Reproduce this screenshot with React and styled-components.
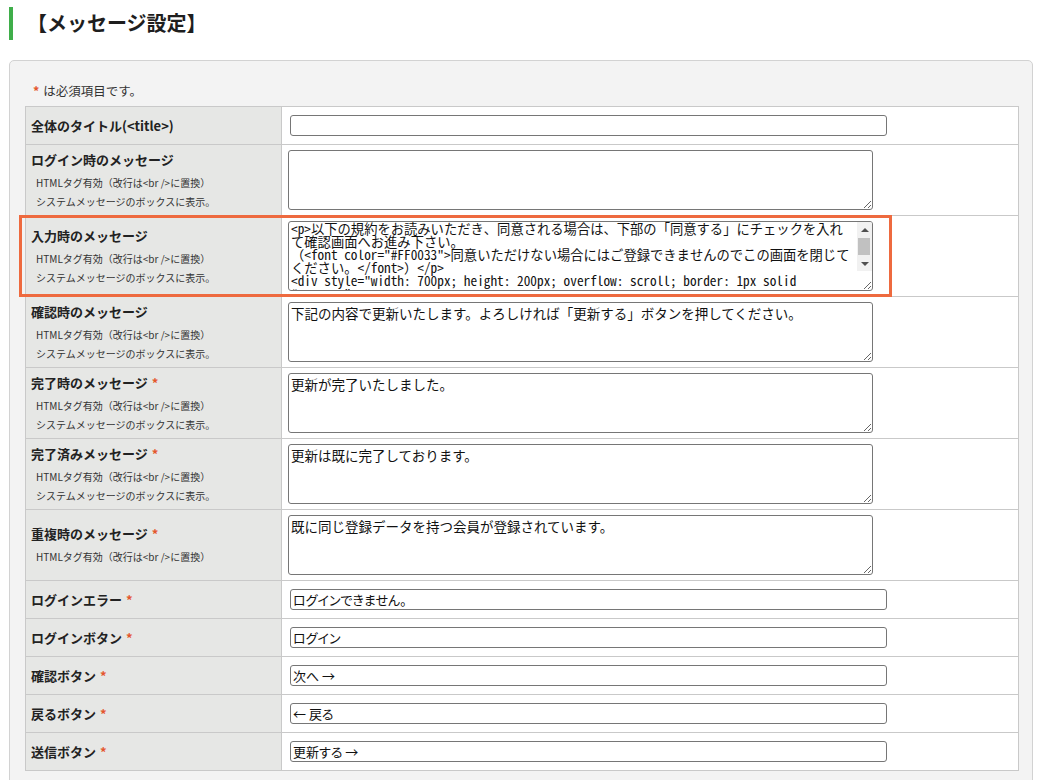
import styled, { createGlobalStyle } from 'styled-components';

const GlobalStyle = createGlobalStyle`
  body {
    margin: 0;
    background: #fff;
    font-family: "Noto Sans CJK JP", "Noto Sans", sans-serif;
    color: #222;
  }
`;

const Page = styled.div`
  padding: 7px 8px 0 9px;
`;

const Heading = styled.h2`
  margin: 0;
  height: 33px;
  display: flex;
  align-items: center;
  border-left: 4px solid #3fae4a;
  padding-left: 14px;
  padding-bottom: 3px;
  box-sizing: border-box;
  font-size: 20px;
  font-weight: 700;
  color: #1e1e1e;
`;

const Panel = styled.div`
  margin-top: 20px;
  background: #f3f3f3;
  border: 1px solid #d2d2d2;
  border-radius: 5px;
  padding: 21px 14px 20px 15px;
`;

const Note = styled.p`
  margin: 0 0 6px 4px;
  font-size: 12.5px;
  line-height: 18px;
  color: #333;
`;

const Req = styled.span`
  color: #e4572e;
  font-weight: 700;
  margin: 0 4px;
`;

const Table = styled.table`
  width: 994px;
  border-collapse: collapse;
  background: #fff;
  td {
    border: 1px solid #c9c9c9;
    vertical-align: middle;
  }
`;

const LabelCell = styled.td`
  position: relative;
  width: 256px;
  box-sizing: border-box;
  background: #e6e7e5;
  padding: 4px 5px;
`;

const ValueCell = styled.td`
  padding: ${(p) => (p.$area ? '5px 6px' : '8px 6px')};
`;

const Title = styled.div`
  font-size: 13px;
  font-weight: 700;
  line-height: 20px;
  color: #222;
  ${Req} {
    margin: 0 0 0 4px;
  }
`;

const Subs = styled.div`
  margin-top: 3px;
  padding-left: 5px;
`;

const Sub = styled.div`
  font-size: 10px;
  line-height: 19px;
  color: #333;
`;

const Input = styled.input`
  display: block;
  box-sizing: border-box;
  width: 597px;
  height: 21px;
  margin: 0 0 0 2px;
  padding: 0 2px;
  border: 1px solid #767676;
  border-radius: 3px;
  background: #fff;
  font-family: "Noto Sans CJK JP", sans-serif;
  font-feature-settings: "palt";
  font-size: 13px;
  color: #111;
  outline: none;
`;

const AreaWrap = styled.div`
  position: relative;
  width: 585px;
`;

const Area = styled.textarea`
  display: block;
  box-sizing: border-box;
  width: 585px;
  height: ${(p) => (p.$mono ? '70px' : '60px')};
  margin: 0;
  padding: ${(p) => (p.$mono ? '0 18px 0 2px' : '2px 2px')};
  border: 1px solid #767676;
  border-radius: 3px;
  background: #fff;
  font-family: ${(p) =>
    p.$mono
      ? '"Noto Sans Mono CJK JP", "Liberation Mono", "Noto Sans CJK JP", monospace'
      : '"Noto Sans CJK JP", sans-serif'};
  font-size: ${(p) => (p.$mono ? '13.3px' : '13.5px')};
  line-height: ${(p) => (p.$mono ? '13px' : '17px')};
  color: #111;
  overflow: hidden;
  outline: none;
`;

/* drawn scrollbar for the overflowing textarea (headless hides native ones) */
const ScrollRail = styled.div`
  position: absolute;
  top: 1px;
  right: 1px;
  width: 15px;
  height: 49px;
  display: flex;
  flex-direction: column;
  background: #f1f1f1;
  border-top-right-radius: 2px;
  pointer-events: none;
`;

const ScrollArrow = styled.div`
  height: 15px;
  display: flex;
  align-items: center;
  justify-content: center;
  &::after {
    content: '';
    border-left: 4px solid transparent;
    border-right: 4px solid transparent;
    ${(p) =>
      p.$down
        ? 'border-top: 4px solid #505050;'
        : 'border-bottom: 4px solid #505050;'}
  }
`;

const ScrollThumb = styled.div`
  flex: 1;
  margin: 1px 2px 1px 1px;
  background: #c1c1c1;
`;

const Highlight = styled.div`
  position: absolute;
  left: -7px;
  top: -1px;
  width: 873px;
  height: calc(100% + 2px);
  box-sizing: border-box;
  border: 3px solid #ee6a3f;
  pointer-events: none;
`;

const SUB1 = 'HTMLタグ有効（改行は<br />に置換）';
const SUB2 = 'システムメッセージのボックスに表示。';

const MONO_TEXT = [
  '<p>以下の規約をお読みいただき、同意される場合は、下部の「同意する」にチェックを入れ',
  'て確認画面へお進み下さい。',
  '（<font color="#FF0033">同意いただけない場合にはご登録できませんのでこの画面を閉じて',
  'ください。</font>）</p>',
  '<div style="width: 700px; height: 200px; overflow: scroll; border: 1px solid',
  '#cccccc;">',
].join('\n');

const rows = [
  { label: '全体のタイトル(<title>)', kind: 'input', value: '' },
  { label: 'ログイン時のメッセージ', kind: 'area', subs: [SUB1, SUB2], value: '' },
  { label: '入力時のメッセージ', kind: 'area', subs: [SUB1, SUB2], value: MONO_TEXT, mono: true, mark: true },
  { label: '確認時のメッセージ', kind: 'area', subs: [SUB1, SUB2], value: '下記の内容で更新いたします。よろしければ「更新する」ボタンを押してください。' },
  { label: '完了時のメッセージ', req: true, kind: 'area', subs: [SUB1, SUB2], value: '更新が完了いたしました。' },
  { label: '完了済みメッセージ', req: true, kind: 'area', subs: [SUB1, SUB2], value: '更新は既に完了しております。' },
  { label: '重複時のメッセージ', req: true, kind: 'area', subs: [SUB1], value: '既に同じ登録データを持つ会員が登録されています。' },
  { label: 'ログインエラー', req: true, kind: 'input', value: 'ログインできません。' },
  { label: 'ログインボタン', req: true, kind: 'input', value: 'ログイン' },
  { label: '確認ボタン', req: true, kind: 'input', value: '次へ →' },
  { label: '戻るボタン', req: true, kind: 'input', value: '← 戻る' },
  { label: '送信ボタン', req: true, kind: 'input', value: '更新する →' },
];

export default function App() {
  return (
    <Page>
      <GlobalStyle />
      <Heading>【メッセージ設定】</Heading>
      <Panel>
        <Note>
          <Req>*</Req>は必須項目です。
        </Note>
        <Table>
          <tbody>
            {rows.map((row) => (
              <tr key={row.label}>
                <LabelCell>
                  <Title>
                    {row.label}
                    {row.req && <Req>*</Req>}
                  </Title>
                  {row.subs && (
                    <Subs>
                      {row.subs.map((s) => (
                        <Sub key={s}>{s}</Sub>
                      ))}
                    </Subs>
                  )}
                  {row.mark && <Highlight />}
                </LabelCell>
                <ValueCell $area={row.kind === 'area'}>
                  {row.kind === 'input' ? (
                    <Input type="text" defaultValue={row.value} />
                  ) : (
                    <AreaWrap>
                      <Area
                        defaultValue={row.value}
                        $mono={row.mono}
                        wrap={row.mono ? 'off' : 'soft'}
                        spellCheck={false}
                      />
                      {row.mono && (
                        <ScrollRail>
                          <ScrollArrow />
                          <ScrollThumb />
                          <ScrollArrow $down />
                        </ScrollRail>
                      )}
                    </AreaWrap>
                  )}
                </ValueCell>
              </tr>
            ))}
          </tbody>
        </Table>
      </Panel>
    </Page>
  );
}
